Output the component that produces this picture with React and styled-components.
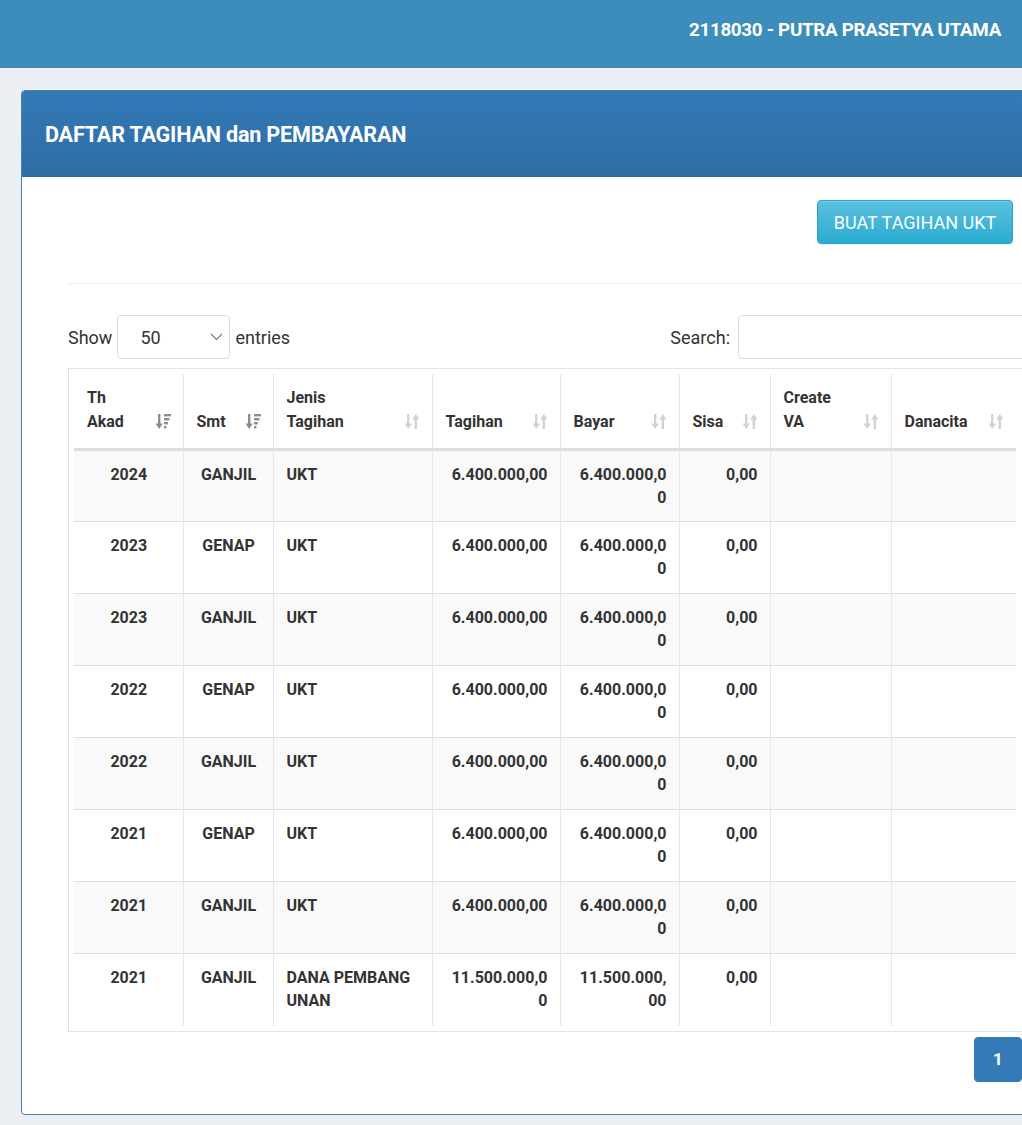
import styled, { createGlobalStyle } from "styled-components";

const GlobalStyle = createGlobalStyle`
  html, body {
    margin: 0;
    padding: 0;
    background: #ecf0f5;
    font-family: Roboto, "Liberation Sans", sans-serif;
    color: #333;
    overflow: hidden;
  }
`;

const rows = [
  { th: "2024", smt: "GANJIL", jenis: "UKT", tagihan: "6.400.000,00", bayar: "6.400.000,00", sisa: "0,00" },
  { th: "2023", smt: "GENAP", jenis: "UKT", tagihan: "6.400.000,00", bayar: "6.400.000,00", sisa: "0,00" },
  { th: "2023", smt: "GANJIL", jenis: "UKT", tagihan: "6.400.000,00", bayar: "6.400.000,00", sisa: "0,00" },
  { th: "2022", smt: "GENAP", jenis: "UKT", tagihan: "6.400.000,00", bayar: "6.400.000,00", sisa: "0,00" },
  { th: "2022", smt: "GANJIL", jenis: "UKT", tagihan: "6.400.000,00", bayar: "6.400.000,00", sisa: "0,00" },
  { th: "2021", smt: "GENAP", jenis: "UKT", tagihan: "6.400.000,00", bayar: "6.400.000,00", sisa: "0,00" },
  { th: "2021", smt: "GANJIL", jenis: "UKT", tagihan: "6.400.000,00", bayar: "6.400.000,00", sisa: "0,00" },
  { th: "2021", smt: "GANJIL", jenis: "DANA PEMBANGUNAN", tagihan: "11.500.000,00", bayar: "11.500.000,00", sisa: "0,00" },
];

const columns = [
  { label: ["Th", "Akad"], width: 109, active: true },
  { label: ["Smt"], width: 90, active: true },
  { label: ["Jenis", "Tagihan"], width: 159 },
  { label: ["Tagihan"], width: 128 },
  { label: ["Bayar"], width: 119 },
  { label: ["Sisa"], width: 91 },
  { label: ["Create", "VA"], width: 121 },
  { label: ["Danacita"], width: 125 },
];

const SortIcon = ({ active }) =>
  active ? (
    <svg width="16" height="17" viewBox="0 0 16 17">
      <g fill="#8c8c8c">
        <rect x="3" y="1" width="2.4" height="11" />
        <path d="M0.5 10.5 L7.9 10.5 L4.2 16 Z" />
        <rect x="9" y="1" width="7" height="2.4" />
        <rect x="9" y="5" width="5.5" height="2.4" />
        <rect x="9" y="9" width="4" height="2.4" />
        <rect x="9" y="13" width="2.4" height="2.4" />
      </g>
    </svg>
  ) : (
    <svg width="16" height="17" viewBox="0 0 16 17">
      <g fill="#d2d2d2">
        <rect x="3" y="1" width="2.4" height="11" />
        <path d="M0.5 10.5 L7.9 10.5 L4.2 16 Z" />
        <rect x="10.6" y="5" width="2.4" height="11" />
        <path d="M8.1 6.5 L15.5 6.5 L11.8 1 Z" />
      </g>
    </svg>
  );

const Chevron = () => (
  <svg width="13" height="8" viewBox="0 0 13 8">
    <path d="M1 1 L6.5 6.5 L12 1" fill="none" stroke="#777" strokeWidth="1.1" />
  </svg>
);

export default function App() {
  return (
    <>
      <GlobalStyle />
      <TopBar>
        <UserName>2118030 - PUTRA PRASETYA UTAMA</UserName>
      </TopBar>
      <Content>
        <Panel>
          <PanelHeading>DAFTAR TAGIHAN dan PEMBAYARAN</PanelHeading>
          <PanelBody>
            <ActionRow>
              <InfoButton>BUAT TAGIHAN UKT</InfoButton>
            </ActionRow>
            <Divider />
            <ControlsRow>
              <Label>
                Show
                <SelectBox>
                  <span>50</span>
                  <Chevron />
                </SelectBox>
                entries
              </Label>
              <Label $search>
                Search:
                <SearchInput />
              </Label>
            </ControlsRow>
            <TableWrap>
              <Table>
                <colgroup>
                  {columns.map((c, i) => (
                    <col key={i} style={{ width: c.width }} />
                  ))}
                </colgroup>
                <thead>
                  <tr>
                    {columns.map((c, i) => (
                      <Th key={i}>
                        <HeadInner>
                          <span>
                            {c.label.map((l, j) => (
                              <div key={j}>{l}</div>
                            ))}
                          </span>
                          <SortIcon active={c.active} />
                        </HeadInner>
                      </Th>
                    ))}
                  </tr>
                </thead>
                <tbody>
                  {rows.map((r, i) => (
                    <Tr key={i} $striped={i % 2 === 0}>
                      <Td $align="center">{r.th}</Td>
                      <Td $align="center">{r.smt}</Td>
                      <Td>{r.jenis}</Td>
                      <Td $align="right">{r.tagihan}</Td>
                      <Td $align="right">{r.bayar}</Td>
                      <Td $align="right">{r.sisa}</Td>
                      <Td />
                      <Td />
                    </Tr>
                  ))}
                </tbody>
              </Table>
            </TableWrap>
            <Pager>
              <PageButton>1</PageButton>
            </Pager>
          </PanelBody>
        </Panel>
      </Content>
    </>
  );
}

const TopBar = styled.header`
  height: 68px;
  background: #3c8dbc;
  border-bottom: 1px solid #3a86b4;
  display: flex;
  align-items: center;
  justify-content: flex-end;
  padding-right: 21px;
  box-sizing: border-box;
`;

const UserName = styled.div`
  color: #fff;
  font-weight: 700;
  font-size: 18.8px;
  letter-spacing: -0.3px;
  margin-top: -8px;
`;

const Content = styled.main`
  padding: 22px 0 0 21px;
  width: 1062px;
  box-sizing: border-box;
`;

const Panel = styled.section`
  width: 1040px;
  background: #fff;
  border: 1px solid #4a80b3;
  border-radius: 4px;
  box-sizing: border-box;
`;

const PanelHeading = styled.h2`
  margin: 0;
  height: 86px;
  display: flex;
  align-items: center;
  padding-left: 23px;
  background: linear-gradient(#337ab7, #2e6da4);
  border-radius: 3px 3px 0 0;
  color: #fff;
  font-size: 21.6px;
  font-weight: 700;
  letter-spacing: -0.2px;
`;

const PanelBody = styled.div`
  padding: 23px 37px 32px 46px;
`;

const ActionRow = styled.div`
  display: flex;
  justify-content: flex-end;
  padding-right: 10px;
`;

const InfoButton = styled.button`
  height: 44px;
  width: 196px;
  border: 1px solid #28a4c9;
  border-radius: 4px;
  background: linear-gradient(#5bc0de, #2aabd2);
  color: #fff;
  font-family: Roboto, "Liberation Sans", sans-serif;
  font-size: 18px;
  padding: 0;
  box-shadow: inset 0 1px 0 rgba(255, 255, 255, 0.15), 0 1px 1px rgba(0, 0, 0, 0.075);
`;

const Divider = styled.hr`
  border: 0;
  border-top: 1px solid #eee;
  margin: 39px -40px 31px 0;
`;

const ControlsRow = styled.div`
  display: flex;
  justify-content: space-between;
  align-items: center;
  margin-bottom: 9px;
`;

const Label = styled.label`
  display: flex;
  align-items: center;
  gap: 5px;
  font-size: 18px;
  color: #333;
  margin-right: ${(p) => (p.$search ? "-20px" : "0")};
`;

const SelectBox = styled.div`
  width: 113px;
  height: 44px;
  box-sizing: border-box;
  border: 1px solid #ddd;
  border-radius: 4px;
  display: flex;
  align-items: center;
  justify-content: space-between;
  padding: 0 6px 0 22px;
  font-size: 18px;
`;

const SearchInput = styled.div`
  width: 305px;
  height: 44px;
  box-sizing: border-box;
  border: 1px solid #ddd;
  border-radius: 4px;
  margin-left: 3px;
`;

const TableWrap = styled.div`
  border: 1px solid #e3e3e3;
  padding: 5px;
`;

const Table = styled.table`
  width: 942px;
  table-layout: fixed;
  border-collapse: collapse;
  font-size: 16px;
  font-weight: 700;
  color: #333;
`;

const Th = styled.th`
  padding: 12px 12px 14px 13px;
  line-height: 24px;
  vertical-align: bottom;
  text-align: left;
  border-bottom: 3px solid #ddd;
  & + & {
    border-left: 1px solid #e6e6e6;
  }
`;

const HeadInner = styled.div`
  display: flex;
  justify-content: space-between;
  align-items: flex-end;
  svg {
    margin-bottom: 4px;
    flex-shrink: 0;
  }
`;

const Tr = styled.tr`
  height: 72px;
  background: ${(p) => (p.$striped ? "#f9f9f9" : "#fff")};
`;

const Td = styled.td`
  padding: 12px 12px 12px 13px;
  line-height: 23px;
  vertical-align: top;
  text-align: ${(p) => p.$align || "left"};
  word-break: break-all;
  border-top: 1px solid #ddd;
  & + & {
    border-left: 1px solid #e6e6e6;
  }
`;

const Pager = styled.div`
  display: flex;
  justify-content: flex-end;
  margin-top: 5px;
  margin-right: 1px;
`;

const PageButton = styled.button`
  width: 48px;
  height: 45px;
  border: 1px solid #337ab7;
  border-radius: 4px;
  background: #337ab7;
  color: #fff;
  font-family: Roboto, "Liberation Sans", sans-serif;
  font-size: 17px;
  font-weight: 700;
`;
